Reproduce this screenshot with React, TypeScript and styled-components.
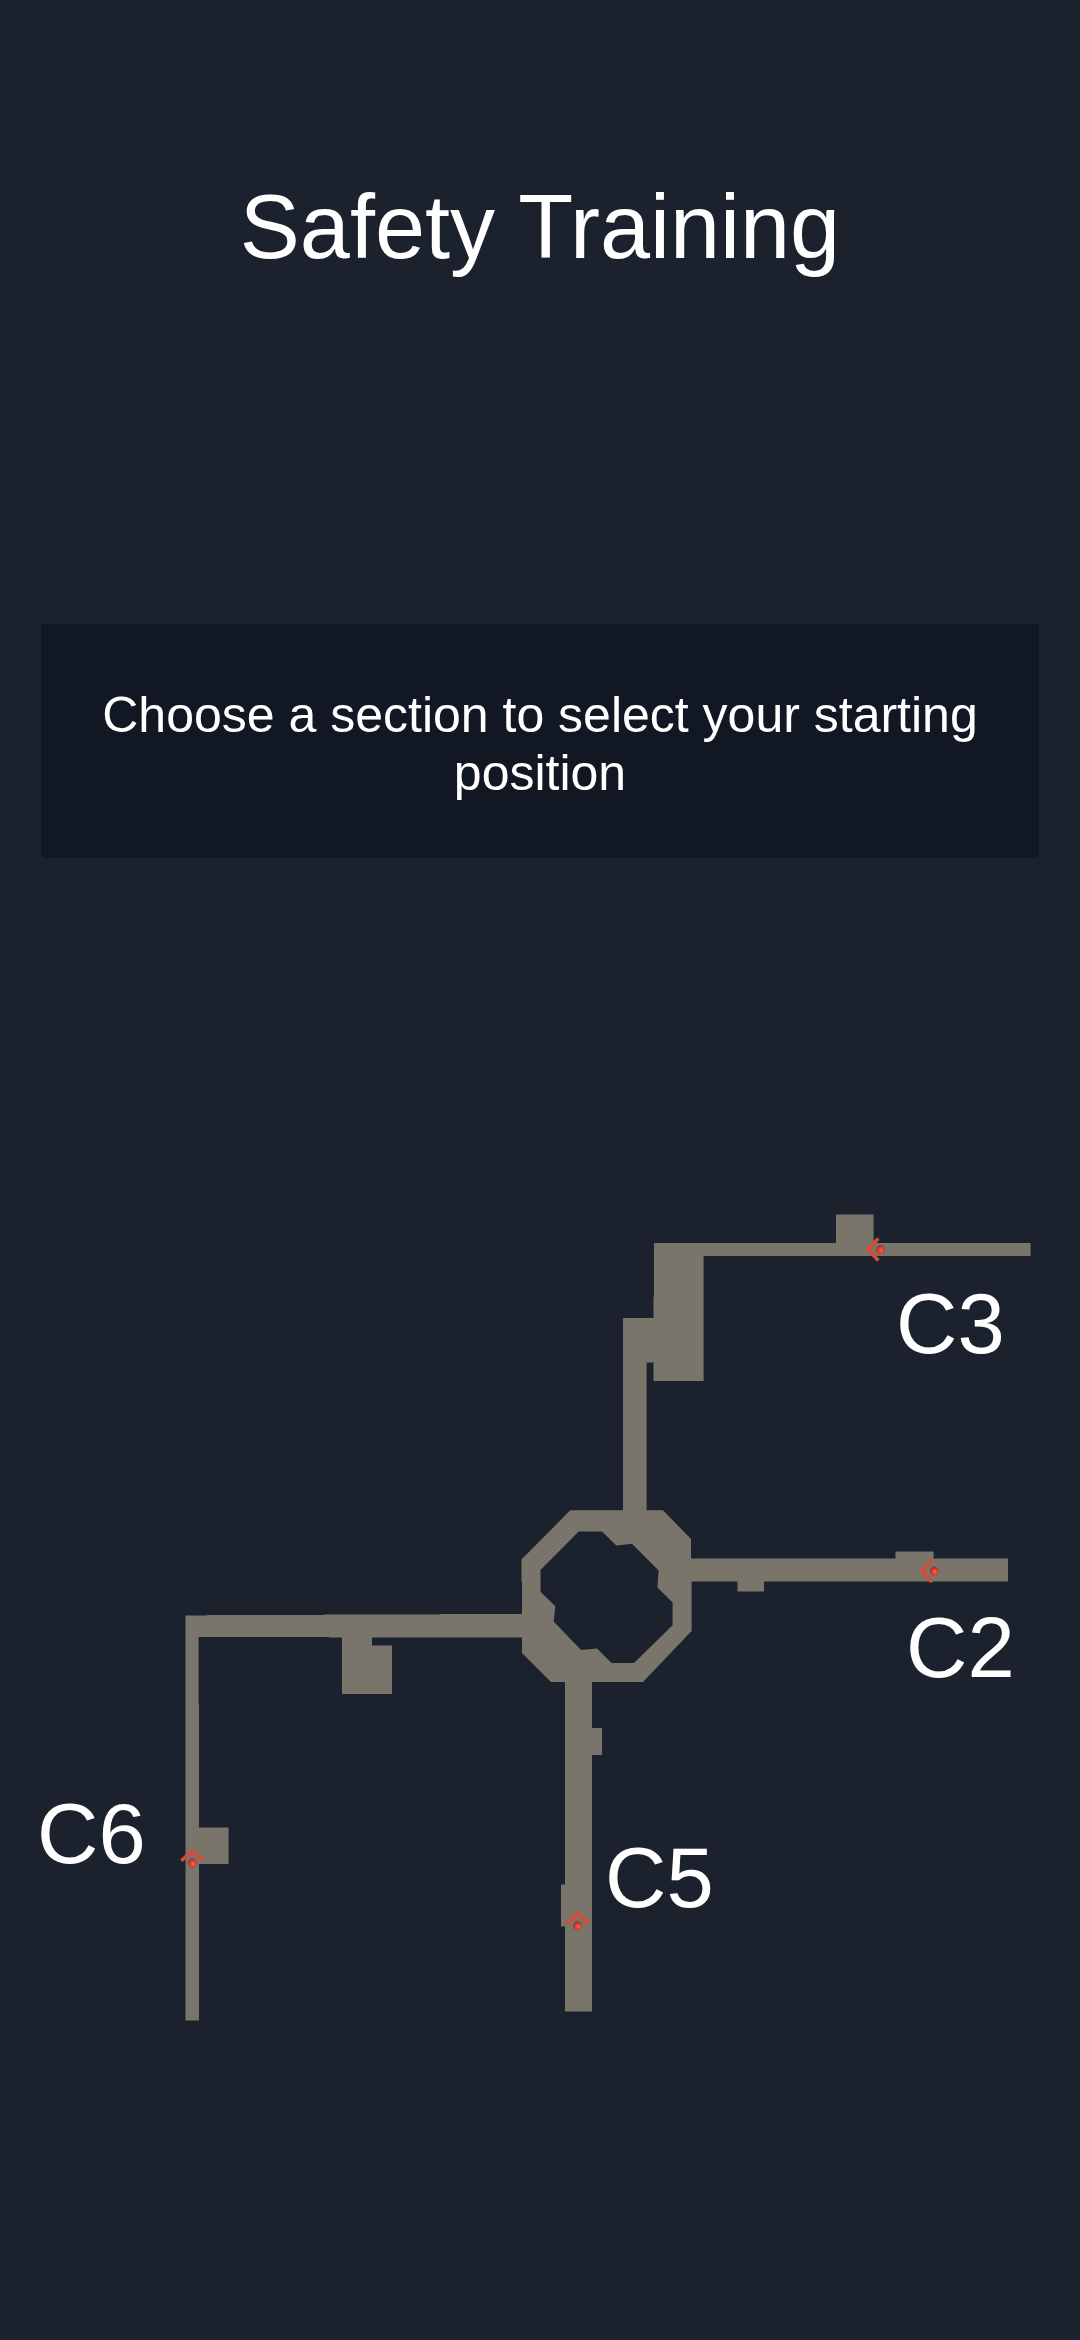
import React from "react";
import styled, { createGlobalStyle } from "styled-components";

const GlobalStyle = createGlobalStyle`
  body {
    margin: 0;
    background: #1b222e;
  }
`;

const Screen = styled.main`
  display: flex;
  flex-direction: column;
  width: 1080px;
  height: 2340px;
  overflow: hidden;
  background: #1b222e;
  color: #ffffff;
  font-family: "Liberation Sans", Arial, sans-serif;
`;

const Header = styled.header`
  display: flex;
  align-items: center;
  justify-content: center;
  height: 454px;
  flex: none;
`;

const Title = styled.h1`
  margin: 0;
  font-size: 90px;
  font-weight: 400;
  line-height: 104px;
`;

const Prompt = styled.section`
  display: flex;
  align-items: center;
  justify-content: center;
  box-sizing: border-box;
  height: 234px;
  flex: none;
  margin: 170px 41px 0;
  padding: 6px 40px 0;
  border-radius: 4px;
  background: #121823;
  text-align: center;
`;

const PromptText = styled.p`
  margin: 0;
  font-size: 50px;
  line-height: 58px;
`;

const MapArea = styled.section`
  position: relative;
  flex: 1;
  margin-top: 302px;
`;

const Plan = styled.svg`
  display: block;
  width: 1080px;
  height: 1180px;
`;

const SectionLabel = styled.button<{ $x: number; $y: number }>`
  position: absolute;
  left: ${(p) => p.$x}px;
  top: ${(p) => p.$y}px;
  padding: 0;
  border: 0;
  background: none;
  color: inherit;
  font: inherit;
  font-size: 85px;
  line-height: 98px;
`;

const sections = [
  { id: "C3", x: 896, y: 115, marker: [880.5, 1249.5], turn: -90 },
  { id: "C2", x: 906, y: 439, marker: [934.3, 1571], turn: -90 },
  { id: "C6", x: 37, y: 625, marker: [192.3, 1863], turn: 0 },
  { id: "C5", x: 605, y: 669, marker: [577.6, 1925.7], turn: 0 },
];

const corridors = [
  // C3 wing
  "M654 1243H836V1214.4H873.6V1243H1030.6V1256H703.6V1381H653.5V1362.4H646.6V1520H623V1318H653.5V1297H654Z",
  // C2 wing
  "M680 1558.5H895.5V1551.5H933.6V1558.5H1008V1581.6H764V1591.6H737.5V1581.6H680Z",
  // C6 wing
  "M530 1614H440V1614.5H324V1615H207V1615.5H185.5V2020.6H199V1864H228.6V1827.5H199V1705H198.6V1637H329V1637.6H342V1694H392V1645.4H372V1637.6H530Z",
  // C5 wing
  "M565 1675H592V1728H602V1755H592V2011.6H565V1926.5H561V1884.5H565Z",
];

const hub =
  "M570.3 1510.3H663L691 1539V1558L691.6 1581V1631L643 1682H551L522 1653V1581.5H521.5V1559.5Z" +
  "M578.7 1531.4L540.5 1570V1591.7L555.3 1606.3L553.7 1621.5L581 1650L597 1648.6L611.5 1663H634L672.6 1625.3V1602.5L657.5 1587.5L658.6 1570.5L632 1543.7L616.3 1545.6L602 1531.4Z";

export default function App() {
  return (
    <>
      <GlobalStyle />
      <Screen>
        <Header>
          <Title>Safety Training</Title>
        </Header>
        <Prompt>
          <PromptText>
            Choose a section to select your starting position
          </PromptText>
        </Prompt>
        <MapArea>
          <Plan viewBox="0 1160 1080 1180">
            <defs>
              <radialGradient id="ball" cx="0.58" cy="0.6" r="0.6">
                <stop offset="0" stopColor="#ff6a55" />
                <stop offset="0.5" stopColor="#e03e2d" />
                <stop offset="1" stopColor="#a02c21" />
              </radialGradient>
            </defs>
            <g fill="#7a756a">
              {corridors.map((d) => (
                <path key={d} d={d} />
              ))}
              <path d={hub} fillRule="evenodd" />
            </g>
            {sections.map((s) => (
              <g key={s.id} transform={`translate(${s.marker[0]} ${s.marker[1]})`}>
                <path
                  d="M-11 -2.2L0 -12.4L11 -2.2"
                  fill="none"
                  stroke="#d84a38"
                  strokeWidth="3.6"
                  transform={`rotate(${s.turn})`}
                />
                <circle r="4.4" fill="url(#ball)" />
              </g>
            ))}
          </Plan>
          {sections.map((s) => (
            <SectionLabel key={s.id} $x={s.x} $y={s.y}>
              {s.id}
            </SectionLabel>
          ))}
        </MapArea>
      </Screen>
    </>
  );
}
